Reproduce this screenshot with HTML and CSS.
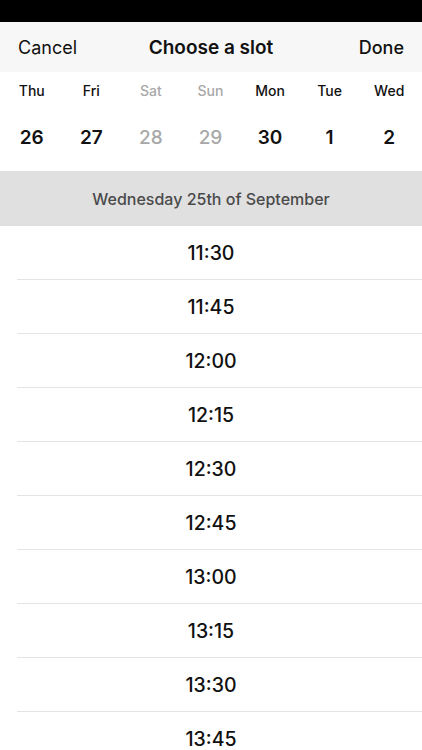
FILE: index.html
```html
<!DOCTYPE html>
<html lang="en">
<head>
    <meta charset="UTF-8">
    <meta name="viewport" content="width=device-width, initial-scale=1.0">
    <title>Choose a slot</title>
    <link rel="stylesheet" href="styles.css">
</head>
<body>
    <div class="statusbar"></div>
    <div class="navbar">
        <span class="nav-btn">Cancel</span>
        <span class="nav-title">Choose a slot</span>
        <span class="nav-btn done">Done</span>
    </div>
    <div class="days">
        <div class="day"><span class="day-name">Thu</span><span class="day-num">26</span></div>
        <div class="day"><span class="day-name">Fri</span><span class="day-num">27</span></div>
        <div class="day off"><span class="day-name">Sat</span><span class="day-num">28</span></div>
        <div class="day off"><span class="day-name">Sun</span><span class="day-num">29</span></div>
        <div class="day"><span class="day-name">Mon</span><span class="day-num">30</span></div>
        <div class="day"><span class="day-name">Tue</span><span class="day-num">1</span></div>
        <div class="day"><span class="day-name">Wed</span><span class="day-num">2</span></div>
    </div>
    <div class="date-header">Wednesday 25th of September</div>
    <ul class="slots">
        <li>11:30</li>
        <li>11:45</li>
        <li>12:00</li>
        <li>12:15</li>
        <li>12:30</li>
        <li>12:45</li>
        <li>13:00</li>
        <li>13:15</li>
        <li>13:30</li>
        <li>13:45</li>
    </ul>
</body>
</html>
```

FILE: styles.css
```css
body {
    font-family: Inter, "Noto Sans", sans-serif;
    margin: 0;
    background: white;
    color: #111;
    height: 750px;
    overflow: hidden;
}
.statusbar {
    height: 22px;
    background: black;
}
.navbar {
    height: 50px;
    background: #f7f7f7;
    display: grid;
    grid-template-columns: 1fr auto 1fr;
    align-items: center;
    padding: 0 18px 0 18px;
    font-size: 18px;
}
.nav-btn {
    color: #111;
}
.done {
    font-weight: 500;
    justify-self: end;
}
.nav-title {
    font-weight: 600;
    font-size: 19px;
}
.days {
    display: grid;
    grid-template-columns: repeat(7, 1fr);
    padding: 0 3px 0 2px;
    height: 99px;
}
.day {
    display: flex;
    flex-direction: column;
    align-items: center;
}
.day-name {
    font-size: 14px;
    font-weight: 500;
    margin-top: 10px;
}
.day-num {
    font-size: 19px;
    font-weight: 600;
    margin-top: 27px;
}
.day.off {
    color: #a8a8a8;
}
.day.off .day-num {
    font-weight: 500;
}
.date-header {
    background: #e0e0e0;
    height: 55px;
    display: flex;
    align-items: center;
    justify-content: center;
    font-size: 16px;
    font-weight: 500;
    color: #4a4a4a;
}
.slots {
    list-style: none;
    margin: 0;
    padding: 0 0 0 17px;
}
.slots li {
    height: 53px;
    border-bottom: 1px solid #e4e4e4;
    display: flex;
    align-items: center;
    justify-content: center;
    padding-right: 17px;
    font-size: 19.5px;
    font-weight: 500;
}
```
